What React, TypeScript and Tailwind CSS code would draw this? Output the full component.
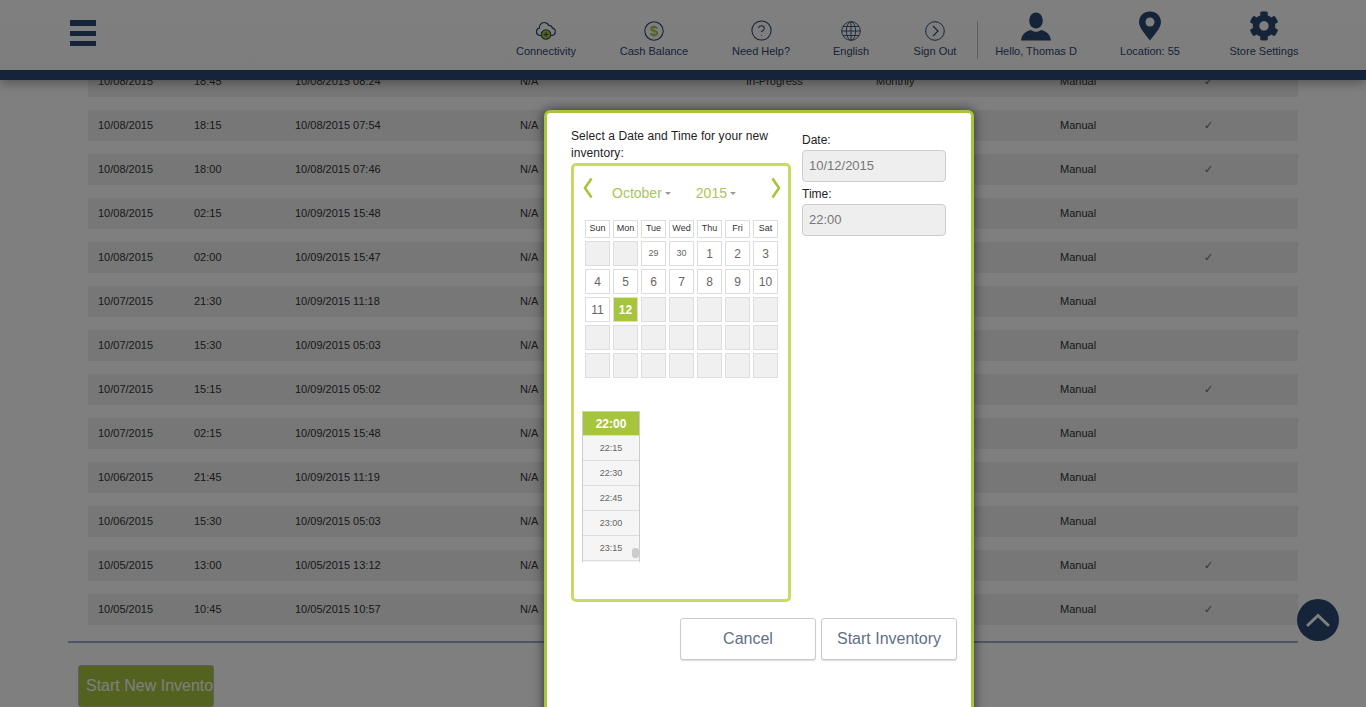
import { CircleHelp } from "lucide-react";
import { FaCog } from "react-icons/fa";
import type { ReactNode } from "react";

const NAVY = "#2c4874";

const rows = [
  { date: "10/08/2015", time: "18:45", started: "10/08/2015 08:24", status: "In-Progress", type: "Monthly", done: true },
  { date: "10/08/2015", time: "18:15", started: "10/08/2015 07:54", status: "", type: "", done: true },
  { date: "10/08/2015", time: "18:00", started: "10/08/2015 07:46", status: "", type: "", done: true },
  { date: "10/08/2015", time: "02:15", started: "10/09/2015 15:48", status: "", type: "", done: false },
  { date: "10/08/2015", time: "02:00", started: "10/09/2015 15:47", status: "", type: "", done: true },
  { date: "10/07/2015", time: "21:30", started: "10/09/2015 11:18", status: "", type: "", done: false },
  { date: "10/07/2015", time: "15:30", started: "10/09/2015 05:03", status: "", type: "", done: false },
  { date: "10/07/2015", time: "15:15", started: "10/09/2015 05:02", status: "", type: "", done: true },
  { date: "10/07/2015", time: "02:15", started: "10/09/2015 15:48", status: "", type: "", done: false },
  { date: "10/06/2015", time: "21:45", started: "10/09/2015 11:19", status: "", type: "", done: false },
  { date: "10/06/2015", time: "15:30", started: "10/09/2015 05:03", status: "", type: "", done: false },
  { date: "10/05/2015", time: "13:00", started: "10/05/2015 13:12", status: "", type: "", done: true },
  { date: "10/05/2015", time: "10:45", started: "10/05/2015 10:57", status: "", type: "", done: true },
];

const weekDays = ["Sun", "Mon", "Tue", "Wed", "Thu", "Fri", "Sat"];
const days: (string | null)[] = [
  null, null, "29", "30", "1", "2", "3",
  "4", "5", "6", "7", "8", "9", "10",
  "11", "12", null, null, null, null, null,
  null, null, null, null, null, null, null,
  null, null, null, null, null, null, null,
];
const times = ["22:15", "22:30", "22:45", "23:00", "23:15"];

function CloudIcon() {
  return (
    <svg width="22" height="20" viewBox="0 0 22 20" fill="none">
      <path d="M6 14.500H5a3.700 3.700 0 0 1-.6-7.300A5 5 0 0 1 9 1.500a5.200 5.200 0 0 1 4.800 2.900 3.600 3.600 0 0 1 3.600 2.800 3.700 3.700 0 0 1-.6 7.300H16" stroke={NAVY} strokeWidth="1.2" />
      <circle cx="11" cy="13.500" r="4.800" fill="#a6c43c" stroke={NAVY} strokeWidth="1.1" />
      <path d="M11 11.200v4.600M8.700 13.500h4.600" stroke={NAVY} strokeWidth="1" />
    </svg>
  );
}

function CashIcon() {
  return (
    <svg width="20" height="20" viewBox="0 0 20 20" fill="none">
      <circle cx="10" cy="10" r="9.200" stroke={NAVY} strokeWidth="1.1" />
      <text x="10" y="15" textAnchor="middle" fontFamily="Liberation Sans, sans-serif" fontWeight="700" fontSize="15" fill="#a6c43c">$</text>
    </svg>
  );
}

function GlobeIcon() {
  return (
    <svg width="20" height="20" viewBox="0 0 20 20" fill="none" stroke={NAVY} strokeWidth="0.9">
      <circle cx="10" cy="10" r="9.300" />
      <ellipse cx="10" cy="10" rx="4.600" ry="9.300" />
      <path d="M10 .7v18.600M.7 10h18.600M2 5.500h16M2 14.500h16" />
    </svg>
  );
}

function SignOutIcon() {
  return (
    <svg width="20" height="20" viewBox="0 0 20 20" fill="none" stroke={NAVY}>
      <circle cx="10" cy="10" r="9.300" strokeWidth="1" />
      <path d="M8 5l5 5-5 5" strokeWidth="1.200" />
    </svg>
  );
}

function UserIcon() {
  return (
    <svg width="30" height="29" viewBox="0 0 30 29" fill={NAVY}>
      <ellipse cx="15" cy="8.500" rx="6.800" ry="8" />
      <path d="M0 28.500c.8-6.500 4.600-9.200 10-10.500 1.500 1.200 3.200 1.800 5 1.800s3.500-.6 5-1.800c5.400 1.300 9.200 4 10 10.500H0z" />
    </svg>
  );
}

function PinIcon() {
  return (
    <svg width="24" height="30" viewBox="0 0 24 30">
      <path d="M12 .5C5.500.5 1 5.200 1 11c0 6 6.500 12.500 11 18.500C16.500 23.500 23 17 23 11 23 5.200 18.500.5 12 .5z" fill={NAVY} />
      <circle cx="12" cy="11" r="4.500" fill="#fff" />
    </svg>
  );
}

function NavItem({ icon, label, width }: { icon: ReactNode; label: string; width: string }) {
  return (
    <div className={`${width} flex flex-col items-center`}>
      <div className="h-[31px] flex items-end justify-center">{icon}</div>
      <span className="mt-[3px] text-[11px] leading-[14px] text-[#2c4874] whitespace-nowrap">{label}</span>
    </div>
  );
}

function Header() {
  return (
    <header className="absolute top-0 left-0 w-full h-[80px] bg-gradient-to-b from-white to-[#fbfbfb] border-b-[10px] border-[#2c4874] shadow-[0_4px_10px_rgba(0,0,0,0.3)] flex items-start justify-between pl-[70px] pr-[44px]">
      {/* Menu button */}
      <div className="mt-[20px] w-[26px] flex flex-col gap-[5px]">
        <div className="h-[6px] bg-[#2c4874]" />
        <div className="h-[5px] bg-[#2c4874]" />
        <div className="h-[5px] bg-[#2c4874]" />
      </div>

      <div className="flex items-start pt-[10px]">
        <NavItem width="w-[98px]" icon={<CloudIcon />} label="Connectivity" />
        <NavItem width="w-[118px]" icon={<CashIcon />} label="Cash Balance" />
        <NavItem width="w-[96px]" icon={<CircleHelp size={23} strokeWidth={1.1} color={NAVY} className="mb-[-1px]" />} label="Need Help?" />
        <NavItem width="w-[84px]" icon={<GlobeIcon />} label="English" />
        <NavItem width="w-[84px]" icon={<SignOutIcon />} label="Sign Out" />
        <div className="w-px h-[38px] mt-[11px] bg-[#bdbdbd]" />
        <NavItem width="w-[116px]" icon={<UserIcon />} label="Hello, Thomas D" />
        <NavItem width="w-[112px]" icon={<PinIcon />} label="Location: 55" />
        <NavItem width="w-[116px]" icon={<FaCog size={30} color={NAVY} />} label="Store Settings" />
      </div>
    </header>
  );
}

function Calendar() {
  return (
    <div className="mt-px w-[220px] h-[439px] border-[3px] border-[#c8dc64] rounded-[5px]">
      <div className="flex items-start h-[54px] pt-[11px] pl-[8px] pr-[6px] text-[14px] leading-[18px] text-[#a8c65c]">
        <svg width="12" height="22" viewBox="0 0 12 22" fill="none" stroke="#a6c43c" strokeWidth="2.6">
          <path d="M9.500 1.500L3 11l6.500 9.500" />
        </svg>
        <span className="ml-[18px] mt-[7px]">October</span>
        <span className="ml-[3px] mt-[15px] border-x-[3px] border-t-[3px] border-x-transparent border-t-[#999]" />
        <span className="ml-[25px] mt-[7px]">2015</span>
        <span className="ml-[3px] mt-[15px] border-x-[3px] border-t-[3px] border-x-transparent border-t-[#999]" />
        <svg className="ml-auto" width="12" height="22" viewBox="0 0 12 22" fill="none" stroke="#a6c43c" strokeWidth="2.6">
          <path d="M2.500 1.500L9 11l-6.500 9.500" />
        </svg>
      </div>

      <div className="ml-[11px] grid grid-cols-[repeat(7,25px)] gap-[3px]">
        {weekDays.map((d) => (
          <div key={d} className="h-[18px] border border-[#ddd] flex items-center justify-center text-[9px] text-[#333]">
            {d}
          </div>
        ))}
        {days.map((d, i) => {
          if (d === null) return <div key={i} className="h-[25px] border border-[#ddd] bg-[#f0f0f0]" />;
          if (d === "12") {
            return (
              <div key={i} className="h-[25px] border border-[#ddd] bg-[#a6c43c] flex items-center justify-center text-[12px] font-bold text-white">
                {d}
              </div>
            );
          }
          const small = d === "29" || d === "30";
          return (
            <div key={i} className={`h-[25px] border border-[#ddd] flex items-center justify-center text-[#666] ${small ? "text-[9px]" : "text-[12px]"}`}>
              {d}
            </div>
          );
        })}
      </div>

      <div className="relative ml-[8px] mt-[33px] w-[58px] h-[151px] border-x border-t border-[#ccc] overflow-hidden bg-[#f5f5f5]">
        <div className="h-[24px] bg-[#a6c43c] flex items-center justify-center text-[12px] font-bold text-white border-b border-[#ddd]">22:00</div>
        {times.map((t) => (
          <div key={t} className="h-[25px] pt-[2px] border-b border-[#ddd] flex items-center justify-center text-[9px] text-[#666]">
            {t}
          </div>
        ))}
        <div className="absolute right-0 top-[136px] w-[7px] h-[10px] rounded-[3px] bg-[#ccc]" />
      </div>
    </div>
  );
}

function StartDialog() {
  return (
    <div className="absolute left-[544px] top-[110px] w-[430px] h-[620px] bg-white border-[3px] border-[#a6c43c] rounded-[6px] shadow-[0_0_12px_rgba(0,0,0,0.6)] pl-[24px] pr-[14px] pt-[15px] text-[12px] text-[#222]">
      <div className="flex">
        <div className="w-[220px]">
          <p className="leading-[17px] tracking-[0.08px]">Select a Date and Time for your new inventory:</p>
          <Calendar />
        </div>
        <div className="ml-[11px] w-[144px]">
          <label className="block h-[22px] leading-[24px]">Date:</label>
          <div className="h-[32px] bg-[#eee] border border-[#ccc] rounded-[4px] flex items-center px-[6px] pb-[1px] text-[13px] text-[#777]">10/12/2015</div>
          <label className="block h-[22px] leading-[24px]">Time:</label>
          <div className="h-[32px] bg-[#eee] border border-[#ccc] rounded-[4px] flex items-center px-[6px] pb-[1px] text-[13px] text-[#777]">22:00</div>
        </div>
      </div>
      <div className="mt-[16px] flex justify-end gap-[5px]">
        <button className="w-[136px] h-[42px] bg-white border border-[#ccc] rounded-[3px] shadow-[0_1px_1px_rgba(0,0,0,0.15)] text-[16px] text-[#5f6f85]">Cancel</button>
        <button className="w-[136px] h-[42px] bg-white border border-[#ccc] rounded-[3px] shadow-[0_1px_1px_rgba(0,0,0,0.15)] text-[16px] text-[#5f6f85]">Start Inventory</button>
      </div>
    </div>
  );
}

export default function App() {
  return (
    <div className="relative h-[707px] overflow-hidden bg-white font-['Liberation_Sans',Arial,sans-serif]">
      <main className="pt-[66px]">
        <div className="ml-[88px] mr-[68px] flex flex-col gap-[13px]">
          {rows.map((r, i) => (
            <div key={i} className="h-[31px] bg-[#eee] grid grid-cols-[96px_101px_225px_226px_130px_184px_143px_1fr] items-center text-[11px] text-[#333] pl-[10px] [&>*]:whitespace-nowrap">
              <span>{r.date}</span>
              <span>{r.time}</span>
              <span>{r.started}</span>
              <span>N/A</span>
              <span>{r.status}</span>
              <span>{r.type}</span>
              <span>Manual</span>
              <span className="pl-px pt-px font-['DejaVu_Sans',sans-serif] text-[#666]">{r.done ? "✓" : ""}</span>
            </div>
          ))}
        </div>
        <div className="ml-[68px] mr-[68px] mt-[16px] h-[2px] bg-[#9fa8d0]" />
        <button className="ml-[78px] mt-[22px] w-[136px] h-[42px] pl-[7px] text-left overflow-hidden whitespace-nowrap bg-[#a6c43c] border border-[#bbb] rounded-[3px] text-[16px] text-white">
          Start New Inventory
        </button>
      </main>

      <Header />

      {/* Back to top */}
      <div className="absolute left-[1297px] top-[599px] w-[42px] h-[42px] rounded-full bg-[#2c4874] flex items-center justify-center">
        <svg width="24" height="14" viewBox="0 0 24 14" fill="none" stroke="#fff" strokeWidth="3" strokeLinecap="round">
          <path d="M2 12L12 2.500 22 12" />
        </svg>
      </div>

      <div className="absolute inset-0 bg-black/50" />
      <StartDialog />
    </div>
  );
}
